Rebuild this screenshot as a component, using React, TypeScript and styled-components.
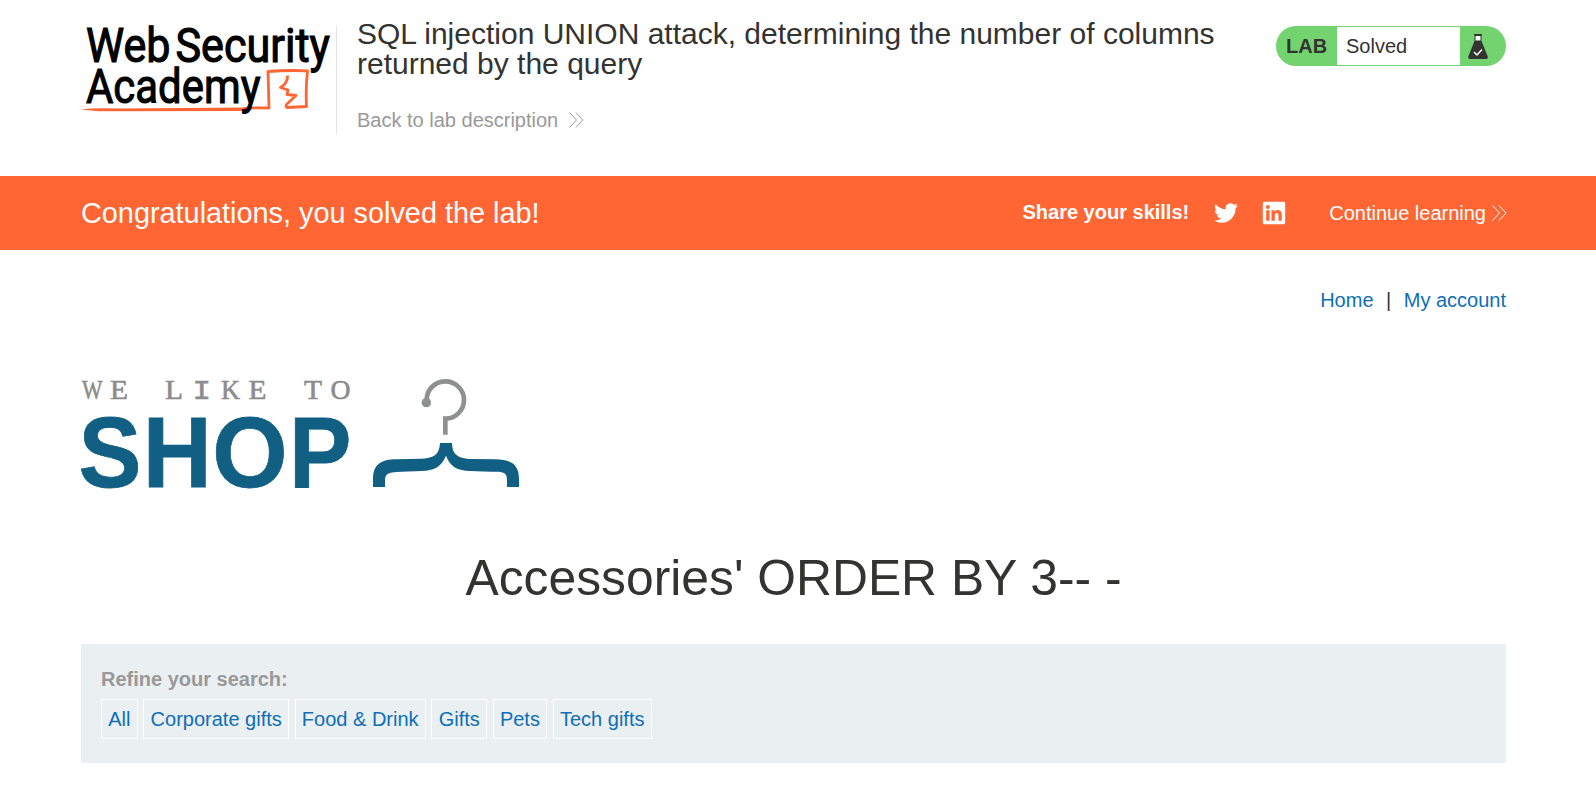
import React from "react";
import styled, { createGlobalStyle } from "styled-components";

const GlobalStyle = createGlobalStyle`
  *, *::before, *::after { box-sizing: border-box; }
  body {
    margin: 0;
    background: #fff;
    color: #333332;
    font: 20px/25px "Liberation Sans", Arial, sans-serif;
  }
  a { text-decoration: none; }
`;

const Container = styled.div`
  margin: 0 90px 0 81px;
`;

const Header = styled(Container)`
  display: flex;
  align-items: flex-start;
  height: 176px;
  padding-top: 19px;
`;

const AcademyLogo = styled.svg`
  flex: none;
  width: 256px;
  height: 108px;
  margin-top: 7px;
  border-right: 1px solid #e0e2e4;
  overflow: visible;
`;

const TitleBlock = styled.div`
  flex: none;
  width: 900px;
  padding-left: 20px;
`;

const LabTitle = styled.h2`
  margin: 0 0 29px;
  font-size: 30px;
  font-weight: 400;
  line-height: 30px;
`;

const BackLink = styled.a`
  display: inline-flex;
  align-items: center;
  gap: 11px;
  color: #999;
`;

const Chevrons = styled.svg`
  width: 15px;
  height: 16px;
  margin-top: -1px;
  fill: none;
  stroke: currentColor;
  stroke-width: 1;
`;

const StatusBadge = styled.div`
  display: flex;
  height: 40px;
  width: 230px;
  margin: 7px 0 0 auto;
  padding: 1px;
  border-radius: 20px;
  background: #72d36f;
  line-height: 38px;
`;

const BadgeLabel = styled.span`
  width: 60px;
  padding-left: 9px;
  font-weight: 700;
`;

const BadgeState = styled.span`
  width: 123px;
  padding-left: 9px;
  background: #fff;
`;

const Flask = styled.svg`
  width: 22px;
  height: 26px;
  margin: 7px 0 0 7px;
`;

const Banner = styled.section`
  height: 74px;
  background: #ff6633;
  color: #fff;
`;

const BannerInner = styled(Container)`
  display: flex;
  align-items: center;
  height: 74px;
  margin-right: 89px;
`;

const BannerTitle = styled.h4`
  margin: 0 auto 0 0;
  font-size: 28.85px;
  font-weight: 400;
  line-height: 34px;
`;

const ShareLabel = styled.span`
  margin-right: 25px;
  padding-bottom: 2px;
  font-weight: 700;
`;

const SocialIcon = styled.svg<{ $gap: number }>`
  width: 24px;
  height: 24px;
  margin-right: ${(p) => p.$gap}px;
  fill: #fff;
`;

const ContinueLink = styled.a`
  display: flex;
  align-items: center;
  gap: 6px;
  color: #fff;
`;

const TopNav = styled.nav`
  display: flex;
  justify-content: flex-end;
  gap: 12.5px;
  padding: 38px 0 0;
  height: 120px;
`;

const Link = styled.a`
  color: #0e6eb8;
`;

const ShopBrand = styled.div`
  display: flex;
  gap: 9px;
  height: 130px;
`;

const Wordmark = styled.svg`
  width: 270px;
  height: 130px;
  overflow: visible;
`;

const Hanger = styled.svg`
  width: 170px;
  height: 130px;
`;

const PageTitle = styled.h1`
  margin: 48px 0 0;
  height: 96px;
  font-size: 49.8px;
  font-weight: 400;
  line-height: 60px;
  text-align: center;
`;

const FilterPanel = styled.section`
  height: 119px;
  padding: 23px 20px 0;
  background: #eaeff2;
`;

const FilterLabel = styled.div`
  margin-bottom: 7px;
  color: #999;
  font-weight: 700;
`;

const Chips = styled.div`
  display: flex;
  gap: 5.6px;
`;

const Chip = styled(Link)`
  height: 40px;
  padding: 0 6.25px;
  border: 1px solid #fff;
  line-height: 38px;
`;

const DoubleChevron = () => (
  <Chevrons viewBox="0 0 15 16">
    <path d="M.5 .5 7.500 8 .5 15.500M7 .5 14 8 7 15.500" />
  </Chevrons>
);

const filters = ["All", "Corporate gifts", "Food & Drink", "Gifts", "Pets", "Tech gifts"];

const SERIF = "'Liberation Serif', serif";
const MONO = "'Liberation Mono', monospace";

/* letter, left edge, advance width, font; the I is a slab letter */
const tagline: [string, number, number, string][] = [
  ["W", 1, 20.5, SERIF], ["E", 29, 18, SERIF], ["L", 84, 18, SERIF], ["I", 111.500, 18.5, MONO],
  ["K", 140, 19, SERIF], ["E", 167.5, 18, SERIF], ["T", 223, 18, SERIF], ["O", 249.5, 20, SERIF],
];

const shop: [string, number, number][] = [
  ["S", -2.5, 63], ["H", 61.8, 69], ["O", 131.3, 75.4], ["P", 208, 62.5],
];

export default function App() {
  return (
    <>
      <GlobalStyle />
      <Header as="header">
        <AcademyLogo viewBox="0 0 255 108">
          <path d="M0 83.500 Q10 81.500 40 82.500 L165 81.500 L162 85 L18 85.300 Z" fill="#ff6633" />
          <path
            d="M163 82.500 Q176 81.500 188 82 L187 45.500 Q205 44 226.500 44.800 Q224.500 63 225.500 80.500 L206 81.500 Q204 80 206 78 L215 69.500 L206 68.500 L207 64 L199.500 61.500 Q207 57 206.500 49.500"
            fill="none" stroke="#ff6633" strokeWidth="2.800" strokeLinejoin="round"
          />
          <g fill="#000" stroke="#000" strokeWidth="1.100" fontFamily="Roboto, sans-serif" fontWeight="400" fontSize="47.500">
            <text x="5" y="36" textLength="84.500" lengthAdjust="spacingAndGlyphs">Web</text>
            <text x="94.500" y="36" textLength="154.500" lengthAdjust="spacingAndGlyphs">Security</text>
            <text x="5" y="76.800" textLength="174.500" lengthAdjust="spacingAndGlyphs">Academy</text>
          </g>
        </AcademyLogo>
        <TitleBlock>
          <LabTitle>SQL injection UNION attack, determining the number of columns returned by the query</LabTitle>
          <BackLink>Back to lab description<DoubleChevron /></BackLink>
        </TitleBlock>
        <StatusBadge>
          <BadgeLabel>LAB</BadgeLabel>
          <BadgeState>Solved</BadgeState>
          <Flask viewBox="0 0 22 26">
            <path d="M7.500 7 H14.500 L20.500 22 Q21.500 25 19 25 H3 Q.5 25 1.500 22 Z" fill="#333332" />
            <path d="M8 1.500 H14 V7 H8 Z" fill="#fff" stroke="#333332" />
            <path d="M7 0 H15 V1.500 H7 Z" fill="#333332" />
            <path d="M7 18 10 21 15 15.500" fill="none" stroke="#fff" strokeWidth="1.500" />
          </Flask>
        </StatusBadge>
      </Header>

      <Banner>
        <BannerInner>
          <BannerTitle>Congratulations, you solved the lab!</BannerTitle>
          <ShareLabel>Share your skills!</ShareLabel>
          <SocialIcon $gap={24} viewBox="0 0 24 24">
            <path d="M23.953 4.570a10 10 0 01-2.825.775 4.958 4.958 0 002.163-2.723c-.951.555-2.005.959-3.127 1.184a4.920 4.920 0 00-8.384 4.482C7.690 8.095 4.067 6.130 1.640 3.162a4.822 4.822 0 00-.666 2.475c0 1.710.870 3.213 2.188 4.096a4.904 4.904 0 01-2.228-.616v.060a4.923 4.923 0 003.946 4.827 4.996 4.996 0 01-2.212.085 4.936 4.936 0 004.604 3.417 9.867 9.867 0 01-6.102 2.105c-.390 0-.779-.023-1.170-.067a13.995 13.995 0 007.557 2.209c9.053 0 13.998-7.496 13.998-13.985 0-.210 0-.420-.015-.630A9.935 9.935 0 0024 4.590z" />
          </SocialIcon>
          <SocialIcon $gap={43} viewBox="0 0 24 24">
            <path fillRule="evenodd" d="M2.500 .8H21.500Q23.200 .8 23.200 2.500V21.500Q23.200 23.200 21.500 23.200H2.500Q.8 23.200 .8 21.500V2.500Q.8 .8 2.500 .8ZM4.200 9.200V19.800H7.500V9.200ZM5.850 4A1.950 1.950 0 1 0 5.850 7.900A1.950 1.950 0 1 0 5.850 4ZM9.500 9.200V19.800H12.800V14.500C12.800 11.200 16.500 11.200 16.500 14.500V19.800H19.800V13.500C19.800 8.500 14.500 8 12.700 10.700V9.200Z" />
          </SocialIcon>
          <ContinueLink>Continue learning<DoubleChevron /></ContinueLink>
        </BannerInner>
      </Banner>

      <Container as="main">
        <TopNav>
          <Link>Home</Link><span>|</span><Link>My account</Link>
        </TopNav>
        <ShopBrand>
          <Wordmark viewBox="0 0 270 130">
            <g fill="#8c8c8c" stroke="#8c8c8c" strokeWidth=".6" fontSize="28">
              {tagline.map(([letter, x, width, family]) => (
                <text key={x} x={x} y="28.800" fontFamily={family} textLength={width} lengthAdjust="spacingAndGlyphs">{letter}</text>
              ))}
            </g>
            <g fill="#115f83" stroke="#115f83" strokeWidth=".8" fontFamily="Liberation Sans, Arial, sans-serif" fontWeight="700" fontSize="100">
              {shop.map(([letter, x, width]) => (
                <text key={letter} x={x} y="117.300" textLength={width} lengthAdjust="spacingAndGlyphs">{letter}</text>
              ))}
            </g>
          </Wordmark>
          <Hanger viewBox="0 0 510 390">
            <path d="M200 92A56 56 0 1 1 256 146V194" fill="none" stroke="#8f9091" strokeWidth="14" />
            <circle cx="199" cy="98" r="14" fill="#8f9091" />
            <path d="M240 219H276C276 255 295 266 335 267L405 268C455 268 477 285 477 328V351H441V330C441 306 430 305 392 305L330 303C293 302 270 290 258 257C245 290 222 302 185 303L125 305C87 306 75 308 75 332V351H39V328C39 285 61 268 111 268L181 266C221 265 238 255 240 219Z" fill="#115f83" />
          </Hanger>
        </ShopBrand>
        <PageTitle>Accessories' ORDER BY 3-- -</PageTitle>
        <FilterPanel>
          <FilterLabel>Refine your search:</FilterLabel>
          <Chips>
            {filters.map((name) => <Chip key={name}>{name}</Chip>)}
          </Chips>
        </FilterPanel>
      </Container>
    </>
  );
}
